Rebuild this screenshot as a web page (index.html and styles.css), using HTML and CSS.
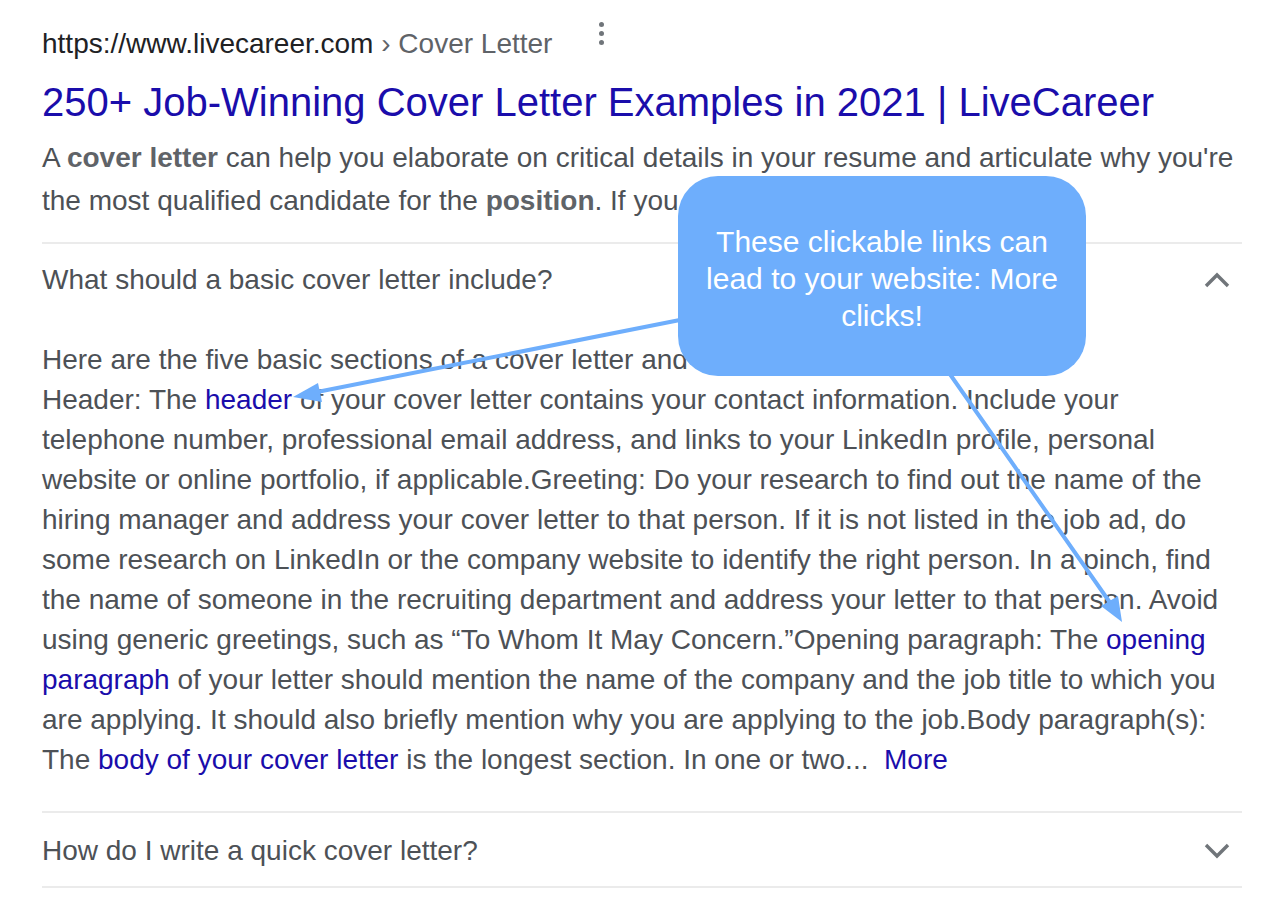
FILE: index.html
```html
<!DOCTYPE html>
<html>
<head>
<meta charset="utf-8">
<link rel="stylesheet" href="styles.css">
</head>
<body>
<div class="result">
  <div class="cite-row">
    <span class="cite">https://www.livecareer.com<span class="crumb"> › Cover Letter</span></span>
    <span class="menu"><i></i><i></i><i></i></span>
  </div>
  <h3 class="title">250+ Job-Winning Cover Letter Examples in 2021 | LiveCareer</h3>
  <div class="snippet">A <b>cover letter</b> can help you elaborate on critical details in your resume and articulate why you're<br>the most qualified candidate for the <b>position</b>. If you are ready to write one,</div>

  <div class="faq">
    <div class="q-row">
      <span class="q">What should a basic cover letter include?</span>
      <svg class="chev" width="26" height="16" viewBox="0 0 26 16"><path d="M2 14 L13 3 L24 14" fill="none" stroke="#70757a" stroke-width="3.4"/></svg>
    </div>
    <div class="answer">Here are the five basic sections of a cover letter and what to include in each:<br>Header: The <a>header</a> of your cover letter contains your contact information. Include your<br>telephone number, professional email address, and links to your LinkedIn profile, personal<br>website or online portfolio, if applicable.Greeting: Do your research to find out the name of the<br>hiring manager and address your cover letter to that person. If it is not listed in the job ad, do<br>some research on LinkedIn or the company website to identify the right person. In a pinch, find<br>the name of someone in the recruiting department and address your letter to that person. Avoid<br>using generic greetings, such as “To Whom It May Concern.”Opening paragraph: The <a>opening</a><br><a>paragraph</a> of your letter should mention the name of the company and the job title to which you<br>are applying. It should also briefly mention why you are applying to the job.Body paragraph(s):<br>The <a>body of your cover letter</a> is the longest section. In one or two...&nbsp; <a>More</a></div>
    <div class="q-row q-last">
      <span class="q">How do I write a quick cover letter?</span>
      <svg class="chev" width="26" height="16" viewBox="0 0 26 16"><path d="M2 2 L13 13 L24 2" fill="none" stroke="#70757a" stroke-width="3.4"/></svg>
    </div>
  </div>
</div>

<svg class="arrows" width="1286" height="906" viewBox="0 0 1286 906">
  <g stroke="#6eaefc" stroke-width="4" fill="none" stroke-linecap="round">
    <line x1="700" y1="316" x2="312" y2="393"/>
    <line x1="940" y1="360" x2="1111" y2="604"/>
  </g>
  <g fill="#6eaefc">
    <polygon points="293,397 318,383 322,402"/>
    <polygon points="1122,622 1101,606 1118,596"/>
  </g>
</svg>

<div class="callout">These clickable links can lead to your website: More clicks!</div>
</body>
</html>
```

FILE: styles.css
```css
html, body {
  margin: 0;
  padding: 0;
  background: #ffffff;
}
body {
  font-family: "Liberation Sans", Arial, sans-serif;
  position: relative;
  width: 1286px;
  height: 906px;
  overflow: hidden;
}
.result {
  width: 1200px;
  padding: 28px 0 0 42px;
}
.cite-row {
  display: flex;
  align-items: center;
  height: 32px;
}
.cite {
  font-size: 28px;
  line-height: 32px;
  color: #202124;
  white-space: nowrap;
}
.crumb {
  color: #5f6368;
}
.menu {
  display: flex;
  flex-direction: column;
  gap: 4px;
  margin-left: 47px;
  margin-top: -22px;
}
.menu i {
  display: block;
  width: 5px;
  height: 5px;
  border-radius: 50%;
  background: #70757a;
}
.title {
  margin: 20px 0 0 0;
  font-weight: normal;
  font-size: 40px;
  line-height: 44px;
  color: #1a0dab;
  white-space: nowrap;
}
.snippet {
  margin-top: 12px;
  font-size: 28px;
  line-height: 43px;
  color: #4d5156;
  white-space: nowrap;
}
.snippet b {
  color: #5f6368;
}
.faq {
  margin-top: 20px;
  border-top: 2px solid #ebebeb;
}
.q-row {
  display: flex;
  justify-content: space-between;
  align-items: center;
  padding: 16px 12px 0 0;
  height: 40px;
}
.q {
  font-size: 28px;
  line-height: 40px;
  color: #4d5156;
}
.chev {
  display: block;
}
.answer {
  margin-top: 40px;
  font-size: 28px;
  line-height: 40px;
  color: #4d5156;
  white-space: nowrap;
  padding-bottom: 31px;
  border-bottom: 2px solid #ebebeb;
}
.answer a {
  color: #1a0dab;
}
.q-last {
  padding-top: 18px;
  padding-bottom: 15px;
  border-bottom: 2px solid #ebebeb;
}
.arrows {
  position: absolute;
  left: 0;
  top: 0;
}
.callout {
  position: absolute;
  left: 678px;
  top: 176px;
  width: 408px;
  height: 200px;
  box-sizing: border-box;
  padding: 4px 24px 0;
  border-radius: 40px;
  background: #6eaefc;
  color: #ffffff;
  font-size: 30px;
  line-height: 37px;
  text-align: center;
  display: flex;
  align-items: center;
  justify-content: center;
}
```
